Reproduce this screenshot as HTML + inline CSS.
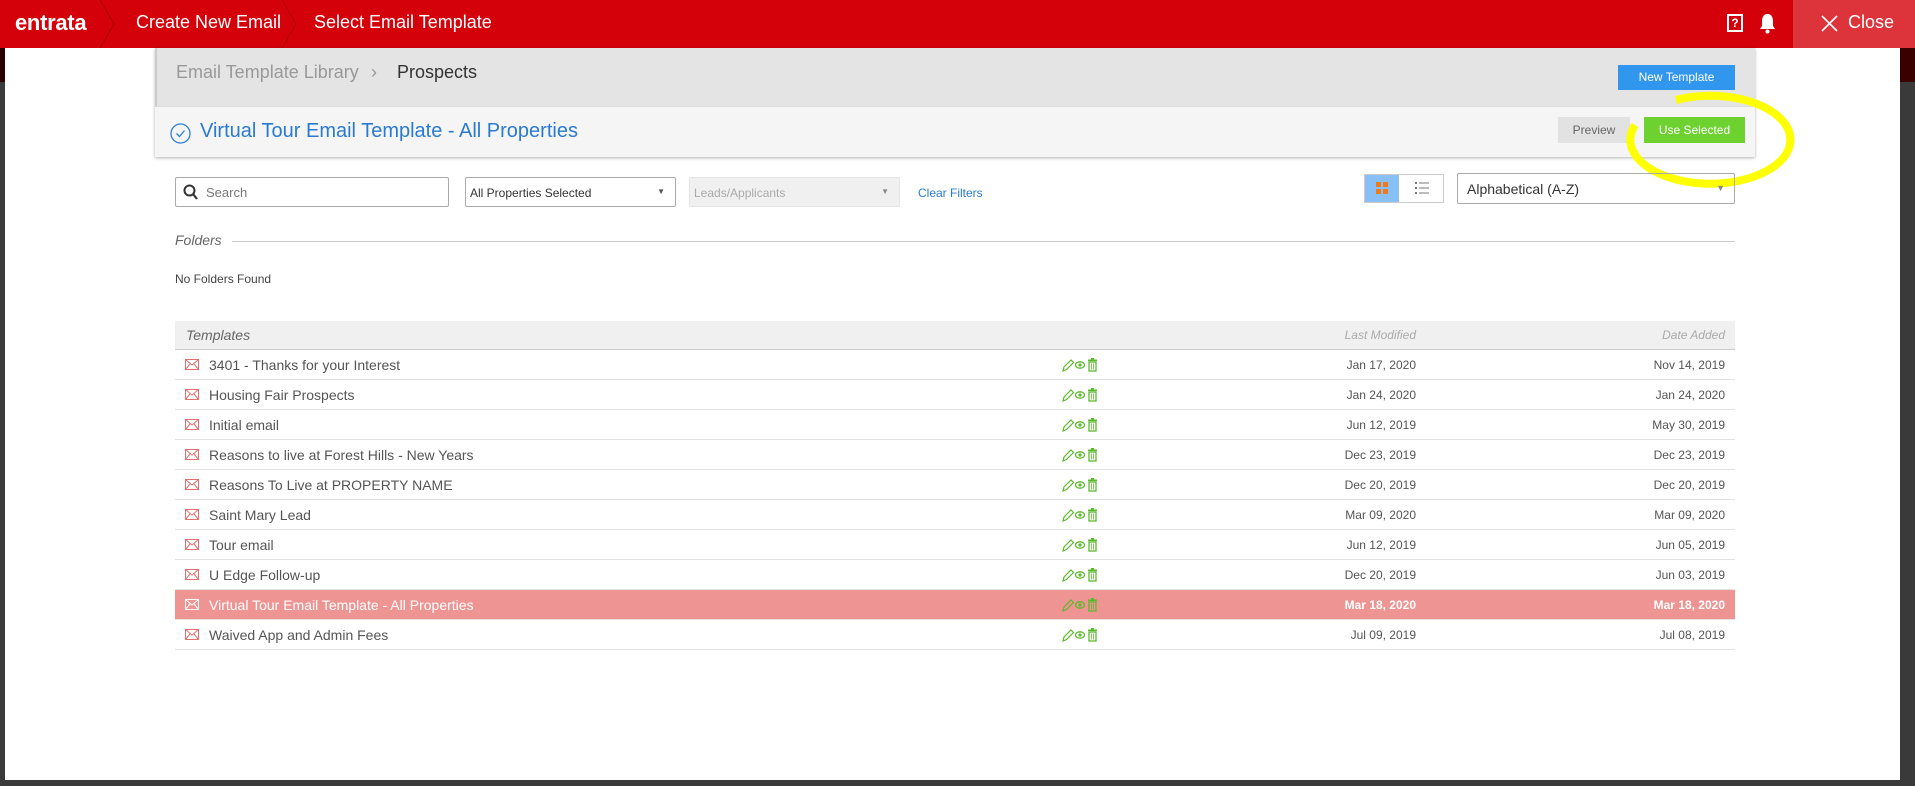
<!DOCTYPE html>
<html><head><meta charset="utf-8"><style>
*{box-sizing:border-box;margin:0;padding:0}
body{width:1915px;height:786px;background:#3a3a3a;font-family:"Liberation Sans",sans-serif;position:relative;overflow:hidden}
.abs{position:absolute}
.hdr{left:0;top:0;width:1915px;height:48px;background:#d4000a}
.hdr .t{color:#fff;font-size:18px;top:12px}
.modal{left:5px;top:48px;width:1895px;height:732px;background:#fff}
.row{position:absolute;left:175px;width:1560px;height:30px;border-bottom:1px solid #e2e2e2;font-size:14px;color:#555}
.row .n{position:absolute;left:34px;top:7px}
.row .env{position:absolute;left:10px;top:9px}
.row .ic{position:absolute;left:885px;top:7px}
.row .d1{position:absolute;right:319px;top:8px;font-size:12px}
.row .d2{position:absolute;right:10px;top:8px;font-size:12px}
.sel{background:#ee9593;color:#fff}
</style></head><body>
<div class="abs" style="left:0;top:48px;width:5px;height:34px;background:#2a0000"></div>
<div class="abs" style="left:1900px;top:48px;width:15px;height:34px;background:#3a0000"></div>
<div class="abs hdr">
 <div class="abs" style="left:15px;top:10px;color:#fff;font-size:22px;font-weight:bold;letter-spacing:-0.3px">entrata</div>
 <svg class="abs" style="left:98px;top:0" width="20" height="48"><path d="M2 0 L16 24 L2 48" stroke="#b00008" stroke-width="1.2" fill="none"/></svg>
 <div class="abs t" style="left:136px">Create New Email</div>
 <svg class="abs" style="left:280px;top:0" width="20" height="48"><path d="M2 0 L16 24 L2 48" stroke="#b00008" stroke-width="1.2" fill="none"/></svg>
 <div class="abs t" style="left:314px">Select Email Template</div>
 <div class="abs" style="left:1727px;top:14px;width:16px;height:18px;border:2px solid #fff;color:#fff;font-size:12px;font-weight:bold;text-align:center;line-height:14px">?</div>
 <svg class="abs" style="left:1759px;top:13px" width="17" height="21" viewBox="0 0 17 21"><path d="M8.5 1 C4 1 3 5 3 9 L3 13 L1 16 L16 16 L14 13 L14 9 C14 5 13 1 8.5 1Z" fill="#fff"/><circle cx="8.5" cy="18.5" r="2" fill="#fff"/></svg>
 <div class="abs" style="left:1793px;top:0;width:122px;height:48px;background:#dc343a"></div>
 <svg class="abs" style="left:1821px;top:15px" width="17" height="17"><path d="M1 1L16 16M16 1L1 16" stroke="#fff" stroke-width="1.6"/></svg>
 <div class="abs t" style="left:1848px;color:#fff">Close</div>
</div>
<div class="abs modal"></div>
<div class="abs" style="left:155px;top:48px;width:1600px;height:109px;box-shadow:0 1px 3px rgba(0,0,0,.3);background:#f5f5f5"></div>
<div class="abs" style="left:155px;top:48px;width:1600px;height:59px;background:#e4e4e4;border-left:2px solid #ccc;border-bottom:1px solid #ddd"></div>
<div class="abs" style="left:176px;top:62px;font-size:18px;color:#999">Email Template Library</div>
<div class="abs" style="left:371px;top:62px;font-size:18px;color:#999">›</div>
<div class="abs" style="left:397px;top:62px;font-size:18px;color:#333">Prospects</div>
<div class="abs" style="left:1618px;top:65px;width:117px;height:25px;background:#3196ee;color:#fff;font-size:12px;text-align:center;line-height:25px">New Template</div>
<svg class="abs" style="left:170px;top:123px" width="21" height="21"><circle cx="10.5" cy="10.5" r="9.5" fill="none" stroke="#2f7fd6" stroke-width="1.3"/><path d="M6.5 10.5l3 3 5-6" fill="none" stroke="#2f7fd6" stroke-width="1.3"/></svg>
<div class="abs" style="left:200px;top:120px;font-size:20px;color:#2a7ad1">Virtual Tour Email Template - All Properties</div>
<div class="abs" style="left:1558px;top:117px;width:72px;height:26px;background:#e2e2e2;color:#666;font-size:12px;text-align:center;line-height:26px">Preview</div>
<div class="abs" style="left:1644px;top:117px;width:101px;height:26px;background:#6dd230;color:#fff;font-size:12px;text-align:center;line-height:26px">Use Selected</div>
<svg class="abs" style="left:1620px;top:88px" width="180" height="110"><path d="M56 12 A80 44 0 1 1 15 37" fill="none" stroke="#ffff00" stroke-width="8"/></svg>
<div class="abs" style="left:175px;top:177px;width:274px;height:30px;border:1px solid #aaa;border-radius:2px"></div>
<svg class="abs" style="left:183px;top:184px" width="15" height="16"><circle cx="6.5" cy="6.5" r="5" fill="none" stroke="#333" stroke-width="2"/><path d="M10 10l4 5" stroke="#333" stroke-width="2.2"/></svg>
<div class="abs" style="left:206px;top:185px;font-size:13px;color:#777">Search</div>
<div class="abs" style="left:465px;top:177px;width:211px;height:30px;border:1px solid #aaa;border-radius:2px;font-size:12px;color:#333;padding:8px 4px">All Properties Selected<span style="position:absolute;right:10px;top:9px;font-size:8px;color:#555">▼</span></div>
<div class="abs" style="left:689px;top:177px;width:211px;height:30px;background:#f0f0f0;border:1px solid #e4e4e4;border-radius:2px;font-size:12px;color:#aaa;padding:8px 4px">Leads/Applicants<span style="position:absolute;right:10px;top:9px;font-size:8px;color:#888">▼</span></div>
<div class="abs" style="left:918px;top:186px;font-size:12px;color:#2a7ad1">Clear Filters</div>
<div class="abs" style="left:1364px;top:174px;width:80px;height:29px;border:1px solid #ccc"></div>
<div class="abs" style="left:1365px;top:175px;width:34px;height:27px;background:#88c0f5"></div>
<svg class="abs" style="left:1376px;top:182px" width="13" height="13"><rect x="0" y="0" width="5" height="5" fill="#f07a1a"/><rect x="7" y="0" width="5" height="5" fill="#f07a1a"/><rect x="0" y="7" width="5" height="5" fill="#f07a1a"/><rect x="7" y="7" width="5" height="5" fill="#f07a1a"/></svg>
<svg class="abs" style="left:1415px;top:182px" width="14" height="13"><g fill="#777"><rect x="0" y="0" width="2" height="2"/><rect x="0" y="5" width="2" height="2"/><rect x="0" y="10" width="2" height="2"/><rect x="4" y="0.5" width="10" height="1"/><rect x="4" y="5.5" width="10" height="1"/><rect x="4" y="10.5" width="10" height="1"/></g></svg>
<div class="abs" style="left:1457px;top:173px;width:278px;height:31px;border:1px solid #aaa;border-radius:2px;font-size:14px;color:#333;padding:7px 9px">Alphabetical (A-Z)<span style="position:absolute;right:9px;top:9px;font-size:9px;color:#888">▼</span></div>
<div class="abs" style="left:175px;top:232px;font-size:14px;color:#666;font-style:italic">Folders</div>
<div class="abs" style="left:232px;top:241px;width:1503px;height:1px;background:#ccc"></div>
<div class="abs" style="left:175px;top:272px;font-size:12px;color:#444">No Folders Found</div>
<div class="abs" style="left:175px;top:321px;width:1560px;height:29px;background:#f0f0f0;border-bottom:1px solid #ccc"></div>
<div class="abs" style="left:186px;top:327px;font-size:14px;font-style:italic;color:#666">Templates</div>
<div class="abs" style="right:499px;top:328px;font-size:12px;font-style:italic;color:#aaa">Last Modified</div>
<div class="abs" style="right:190px;top:328px;font-size:12px;font-style:italic;color:#aaa">Date Added</div>
<div id="rows"></div>
<script>
var d=[["3401 - Thanks for your Interest","Jan 17, 2020","Nov 14, 2019"],["Housing Fair Prospects","Jan 24, 2020","Jan 24, 2020"],["Initial email","Jun 12, 2019","May 30, 2019"],["Reasons to live at Forest Hills - New Years","Dec 23, 2019","Dec 23, 2019"],["Reasons To Live at PROPERTY NAME","Dec 20, 2019","Dec 20, 2019"],["Saint Mary Lead","Mar 09, 2020","Mar 09, 2020"],["Tour email","Jun 12, 2019","Jun 05, 2019"],["U Edge Follow-up","Dec 20, 2019","Jun 03, 2019"],["Virtual Tour Email Template - All Properties","Mar 18, 2020","Mar 18, 2020"],["Waived App and Admin Fees","Jul 09, 2019","Jul 08, 2019"]];
var h="";
d.forEach(function(r,i){var s=i==8;var ec=s?"#fff":"#e07070";
h+='<div class="row'+(s?' sel':'')+'" style="top:'+(350+i*30)+'px"><svg class="env" width="14" height="11"><rect x="0.5" y="0.5" width="13" height="10" fill="none" stroke="'+ec+'"/><path d="M0.5 0.5L7 6L13.5 0.5M0.5 10.5L5 5M13.5 10.5L9 5" fill="none" stroke="'+ec+'"/></svg><span class="n">'+r[0]+'</span>'+
'<svg class="ic" width="45" height="16"><path d="M3 14l1-4 7-7 2.5 2.5-7 7z" fill="none" stroke="#5cb82c" stroke-width="1.2"/><ellipse cx="20" cy="8" rx="4.5" ry="3.2" fill="none" stroke="#5cb82c" stroke-width="1.3"/><circle cx="20" cy="8" r="1.6" fill="#5cb82c"/><rect x="28" y="2.5" width="9" height="1.6" fill="#5cb82c"/><rect x="31" y="1" width="3" height="1.5" fill="#5cb82c"/><rect x="29" y="5" width="7" height="9" fill="none" stroke="#5cb82c" stroke-width="1.3"/><path d="M31.5 6.5v6M33.5 6.5v6" stroke="#5cb82c" stroke-width="0.8"/></svg>'+
'<span class="d1" style="'+(s?'font-weight:bold;color:#fff':'')+'">'+r[1]+'</span><span class="d2" style="'+(s?'font-weight:bold;color:#fff':'')+'">'+r[2]+'</span></div>';});
document.getElementById("rows").innerHTML=h;
</script>
</body></html>
